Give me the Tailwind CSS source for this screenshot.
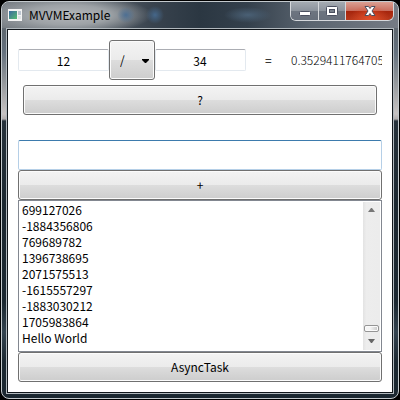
<!DOCTYPE html>
<html lang="en">
<head>
<meta charset="utf-8">
<title>MVVMExample</title>
<script src="https://cdn.jsdelivr.net/npm/@tailwindcss/browser@4"></script>
</head>
<body class="bg-black font-['Noto_Sans_CJK_KR','Noto_Sans',sans-serif] text-xs text-black">
<div class="min-h-screen p-px flex">
  <div class="flex-1 flex flex-col rounded-lg border border-[#c3c9cd] bg-[linear-gradient(180deg,#737981_0px,#5f6870_30px,#65717e_50px,#8b9095_75px,#c6c2c2_112px,#b0acad_117px,#27323b_119px,#1c2831_200px,#1b2730_300px,#33434f_330px,#1c2831_360px,#1c2831_100%)] px-1 pb-1">
    <header class="-mx-1 h-[26px] rounded-t-lg flex items-start justify-between bg-[radial-gradient(ellipse_9px_8px_at_124px_13px,#4d6f93_0%,transparent_100%),radial-gradient(ellipse_9px_9px_at_153px_13px,#45678a_0%,transparent_100%),radial-gradient(ellipse_24px_8px_at_246px_13px,#4a6075_0%,transparent_100%),radial-gradient(ellipse_84px_20px_at_66px_13px,#b4b7ba_0%,#9da2a6_50%,transparent_100%),linear-gradient(90deg,#777d83_0%,#656d75_20%,#39434e_38%,#2b3742_50%,#34404c_62%,#5b6570_78%,#757b84_100%)]">
      <div class="flex items-center gap-[7px] h-[25px] pl-1.5">
        <svg class="w-[14px] h-3" viewBox="0 0 14 12" aria-hidden="true">
          <defs><linearGradient id="app" x1="0" y1="0" x2="1" y2="1"><stop offset="0" stop-color="#3c69a0"/><stop offset="1" stop-color="#55bd72"/></linearGradient></defs>
          <rect width="14" height="12" fill="#f3f3f3"/><rect x="1" y="2" width="8" height="8" fill="url(#app)"/><rect x="10" y="2" width="3" height="4" fill="#bcc5d0"/><rect x="10" y="7" width="3" height="3" fill="#dfe3e6"/>
        </svg>
        <h1 class="leading-4">MVVMExample</h1>
      </div>
      <div class="mr-1 flex h-[19px] rounded-b-md border border-t-0 border-[#d5d8dc] overflow-hidden">
        <button type="button" aria-label="Minimize" class="w-7 flex justify-center items-center border-r border-[#d5d8dc] bg-linear-to-b from-[#a5abb2] from-0% via-[#8b929b] via-50% to-[#7b828c] shadow-[inset_0_-9px_0_#5a636f99]">
          <svg class="w-3 h-3" viewBox="0 0 12 12"><rect x=".5" y="6.5" width="11" height="4" rx="1" fill="#fff" stroke="#4b5060"/></svg>
        </button>
        <button type="button" aria-label="Maximize" class="w-[27px] flex justify-center items-center border-r border-[#d5d8dc] bg-linear-to-b from-[#a5abb2] from-0% via-[#8b929b] via-50% to-[#7b828c] shadow-[inset_0_-9px_0_#5a636f99]">
          <svg class="w-3 h-3" viewBox="0 0 12 12"><rect x=".5" y="1.5" width="11" height="9" rx="1" fill="#fff" stroke="#4b5060"/><rect x="3.500" y="4.500" width="5" height="3" fill="#7b838e" stroke="#4b5060"/></svg>
        </button>
        <button type="button" aria-label="Close" class="w-[47px] flex justify-center items-center bg-[radial-gradient(ellipse_at_50%_100%,#e3502a_0%,transparent_60%),linear-gradient(180deg,#dba093_0%,#c96f5f_48%,#a5240c_50%,#b8391c_100%)]">
          <svg class="w-3 h-3" viewBox="0 0 12 12"><path d="M1 1.500H4.500L6 3.500L7.500 1.500H11L8 6L11 10.500H7.500L6 8.500L4.500 10.500H1L4 6Z" fill="#fff" stroke="#4b5060" stroke-linejoin="round"/></svg>
        </button>
      </div>
    </header>
    <div class="flex-1 flex border border-[#b1b8bd]">
      <main class="flex-1 min-w-0 flex flex-col border border-[#11161b] bg-white px-2.5 py-2.5">
        <section class="grid grid-cols-[2fr_1fr_2fr_1fr_2fr] h-10 items-center">
          <input type="text" aria-label="First operand" value="12" class="min-w-0 w-full h-[22px] border border-[#e3e9ef] border-t-[#abadb3] rounded-xs text-center bg-white outline-none">
          <div class="relative h-10">
            <select aria-label="Operator" class="appearance-none w-full h-full rounded-[3px] border border-[#707070] bg-[linear-gradient(180deg,#f3f3f3_0%,#ebebeb_50%,#dddddd_50%,#cdcdcd_100%)] shadow-[inset_0_0_0_1px_#fbfbfb] pl-2.5 outline-none">
              <option>+</option><option>-</option><option>*</option><option selected>/</option>
            </select>
            <svg class="absolute right-1.5 top-[19px] w-[7px] h-1 pointer-events-none" viewBox="0 0 7 4" aria-hidden="true"><path d="M0 0H7V1L4 4H3L0 1Z"/></svg>
          </div>
          <input type="text" aria-label="Second operand" value="34" class="min-w-0 w-full h-[22px] border border-[#e3e9ef] border-t-[#abadb3] rounded-xs text-center bg-white outline-none">
          <span class="text-center leading-4">=</span>
          <output class="overflow-hidden whitespace-nowrap leading-4 font-light">0.352941176470588</output>
        </section>
        <button type="button" class="mx-[5px] mt-[5px] h-[30px] rounded-[3px] border border-[#707070] bg-[linear-gradient(180deg,#f3f3f3_0%,#ebebeb_50%,#dddddd_50%,#cdcdcd_100%)] shadow-[inset_0_0_0_1px_#fbfbfb]">?</button>
        <input type="text" aria-label="New item" class="mt-[25px] h-[30px] border border-[#b5cfe7] border-t-[#3d7bad] rounded-xs px-1 outline-none">
        <button type="button" class="h-[30px] rounded-[3px] border border-[#707070] bg-[linear-gradient(180deg,#f3f3f3_0%,#ebebeb_50%,#dddddd_50%,#cdcdcd_100%)] shadow-[inset_0_0_0_1px_#fbfbfb]">+</button>
        <section class="flex-1 flex justify-between border border-[#828790] p-px">
          <ul class="px-0.5 leading-4">
            <li>699127026</li>
            <li>-1884356806</li>
            <li>769689782</li>
            <li>1396738695</li>
            <li>2071575513</li>
            <li>-1615557297</li>
            <li>-1883030212</li>
            <li>1705983864</li>
            <li>Hello World</li>
          </ul>
          <div class="w-[17px] flex flex-col bg-linear-to-r from-[#e3e3e3] via-[#ededed] via-20% to-[#ececec]">
            <button type="button" aria-label="Scroll up" class="h-4 flex items-center justify-center"><svg class="w-[7px] h-1" viewBox="0 0 7 4"><path d="M3 0H4L7 4H0Z" fill="#777"/></svg></button>
            <div class="flex-1 flex flex-col justify-end px-px"><div class="h-[7px] rounded-xs border border-[#959595] bg-linear-to-r from-[#f5f5f5] from-40% to-[#c8c8c8] shadow-[inset_0_0_0_1px_#fbfbfb]"></div></div>
            <button type="button" aria-label="Scroll down" class="h-[18px] flex items-center justify-center"><svg class="w-[7px] h-1" viewBox="0 0 7 4"><path d="M0 0H7L4 4H3Z" fill="#666"/></svg></button>
          </div>
        </section>
        <button type="button" class="h-[30px] rounded-[3px] border border-[#707070] bg-[linear-gradient(180deg,#f3f3f3_0%,#ebebeb_50%,#dddddd_50%,#cdcdcd_100%)] shadow-[inset_0_0_0_1px_#fbfbfb]">AsyncTask</button>
      </main>
    </div>
  </div>
</div>
</body>
</html>
